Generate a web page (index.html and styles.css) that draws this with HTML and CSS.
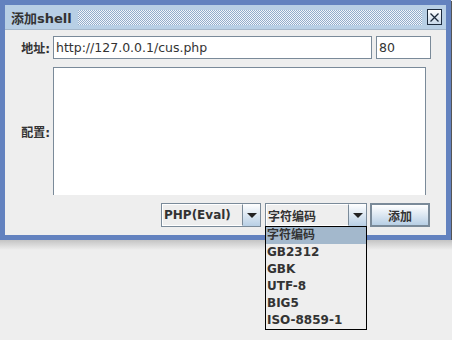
FILE: index.html
```html
<!DOCTYPE html>
<html lang="zh">
  <head>
    <meta charset="UTF-8" />
    <title>添加shell</title>
    <link rel="stylesheet" href="styles.css">
  </head>
  <body>
    <div class="window">
      <div class="titlebar">
        <span class="title">添加shell</span>
        <span class="bumps"></span>
        <span class="close">
          <svg width="13" height="13" viewBox="0 0 13 13">
            <path d="M2.5 2.5 L10.5 10.5 M10.5 2.5 L2.5 10.5" stroke="#1c2a3c" stroke-width="1.3" fill="none" />
          </svg>
        </span>
      </div>

      <div class="content">
        <div class="row">
          <label class="label">地址:</label>
          <input class="field url" type="text" value="http://127.0.0.1/cus.php" />
          <input class="field port" type="text" value="80" />
        </div>

        <div class="row">
          <label class="label">配置:</label>
          <div class="textarea"></div>
        </div>

        <div class="actions">
          <div class="combo type">
            <span class="combo-text">PHP(Eval)</span>
            <span class="combo-arrow"><i></i></span>
          </div>
          <div class="combo charset">
            <span class="combo-text">字符编码</span>
            <span class="combo-arrow"><i></i></span>
            <ul class="popup">
              <li class="selected">字符编码</li>
              <li>GB2312</li>
              <li>GBK</li>
              <li>UTF-8</li>
              <li>BIG5</li>
              <li>ISO-8859-1</li>
            </ul>
          </div>
          <button class="add">添加</button>
        </div>
      </div>
    </div>
    <div class="backdrop"></div>
  </body>
</html>
```

FILE: styles.css
```css
body {
  margin: 0;
  background-color: #eeeeee;
  font-family: "DejaVu Sans", "Noto Sans CJK SC", sans-serif;
  color: #333333;
  overflow: hidden;
}

.window {
  width: 441px;
  border: 5px solid #6382bf;
  background-color: #eeeeee;
  box-shadow: 1px 1px 0 #555;
}

.titlebar {
  display: flex;
  align-items: center;
  height: 24px;
  background-color: #b8cfe5;
  border-bottom: 1px solid #a4b6c9;
  padding: 0 4px 0 6px;
}

.title {
  font-size: 13px;
  font-weight: bold;
  margin-right: 6px;
}

.bumps {
  flex: 1;
  height: 15px;
  margin-right: 5px;
  background: repeating-conic-gradient(#f2f6fb 0 25%, #93acca 0 50%) 0 0 / 2px 2px;
}

.close {
  display: flex;
  align-items: center;
  justify-content: center;
  width: 13px;
  height: 14px;
  border: 1px solid #1c2a3c;
  background: linear-gradient(#ffffff, #c9d9ea);
}

.content {
  padding: 6px 15px 8px 0;
}

.row {
  display: flex;
  align-items: center;
  margin-bottom: 8px;
}

.label {
  width: 45px;
  margin-right: 3px;
  text-align: right;
  font-size: 12px;
  font-weight: bold;
}

.field {
  box-sizing: border-box;
  height: 23px;
  border: 1px solid #7a8a99;
  padding: 0 2px;
  font-family: "DejaVu Sans", sans-serif;
  font-size: 12.5px;
  color: #333333;
  background-color: #ffffff;
  outline: none;
}

.url {
  width: 319px;
  margin-right: 4px;
}

.port {
  width: 55px;
}

.textarea {
  box-sizing: border-box;
  width: 373px;
  height: 128px;
  background-color: #ffffff;
  border: 1px solid #7a8a99;
  border-bottom: none;
}

.actions {
  display: flex;
  justify-content: flex-end;
  padding-right: 1px;
}

.combo {
  position: relative;
  display: flex;
  box-sizing: border-box;
  height: 24px;
  border: 1px solid #7a8a99;
  background-color: #eeeeee;
  font-size: 12px;
  font-weight: bold;
}

.combo.type {
  width: 100px;
  margin-right: 4px;
}

.combo.charset {
  width: 102px;
  margin-right: 3px;
}

.combo-text {
  flex: 1;
  display: flex;
  align-items: center;
  padding-left: 1px;
  border: 1px solid #ffffff;
  border-right-color: #7a8a99;
}

.combo-arrow {
  display: flex;
  align-items: center;
  justify-content: center;
  width: 17px;
  background: linear-gradient(#ffffff, #b8cfe5);
}

.combo-arrow i {
  width: 0;
  height: 0;
  border-left: 5px solid transparent;
  border-right: 5px solid transparent;
  border-top: 5px solid #222;
}

.popup {
  position: absolute;
  left: -1px;
  top: 22px;
  width: 100px;
  margin: 0;
  padding: 0;
  list-style: none;
  border: 1px solid #000000;
  background-color: #eeeeee;
}

.popup li {
  height: 17px;
  line-height: 17px;
  padding-left: 1px;
}

.popup li.selected {
  background-color: #a3b8cc;
}

.add {
  box-sizing: border-box;
  width: 60px;
  height: 24px;
  border: 2px solid #7a8a99;
  background: linear-gradient(#ffffff, #b8cfe5);
  font-family: "DejaVu Sans", "Noto Sans CJK SC", sans-serif;
  font-size: 12px;
  font-weight: bold;
  color: #333333;
  padding: 0;
}

.backdrop {
  height: 110px;
  background: linear-gradient(#c4c4c4, #eeeeee 10px);
}
```
